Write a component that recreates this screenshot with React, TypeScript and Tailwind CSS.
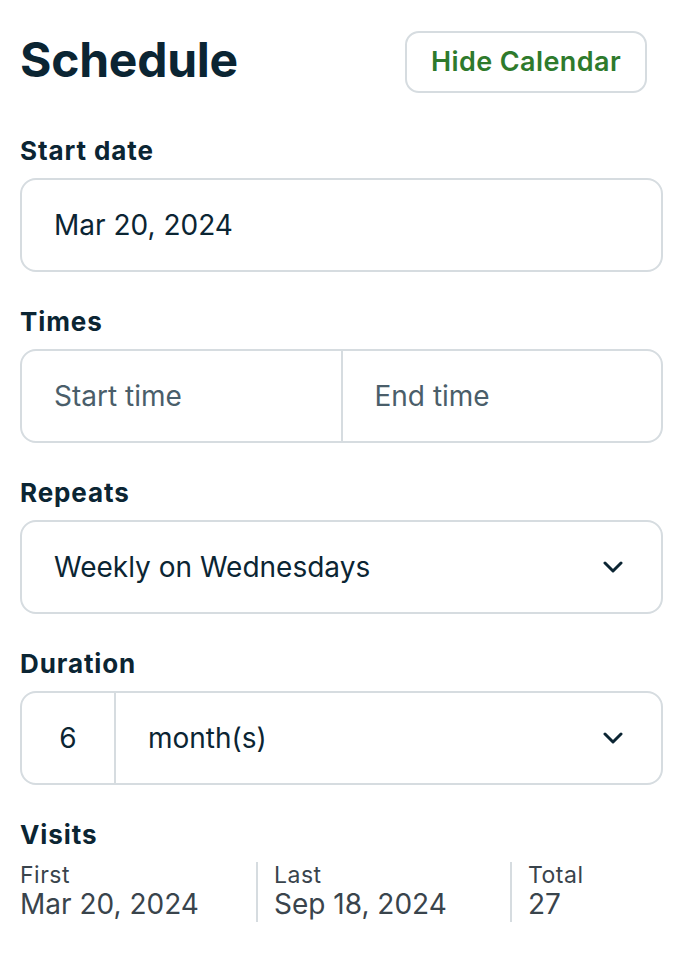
import type { ReactNode } from "react";

const label = "text-[26px] leading-[32px] font-bold tracking-[0.9px] text-[#0b2533]";
const box = "h-[94px] w-[643px] rounded-[16px] border-2 border-[#d6dce0] bg-white flex";

function Field({ title, children, last }: { title: string; children: ReactNode; last?: boolean }) {
  return (
    <div className={last ? "" : "mb-[34px]"}>
      <div className={`${label} mb-[11px]`}>{title}</div>
      {children}
    </div>
  );
}

function Chevron() {
  return (
    <svg width="20" height="12" viewBox="0 0 20 12" fill="none" className="mr-[38px] shrink-0">
      <path d="M2 2l8 8 8-8" stroke="#0b2533" strokeWidth="3" strokeLinecap="round" strokeLinejoin="round" />
    </svg>
  );
}

export default function App() {
  const visits = [
    { label: "First", value: "Mar 20, 2024", cls: "w-[236px]" },
    { label: "Last", value: "Sep 18, 2024", cls: "w-[254px] border-l-2 border-[#d6dce0] pl-4" },
    { label: "Total", value: "27", cls: "flex-1 border-l-2 border-[#d6dce0] pl-4" },
  ];

  return (
    <div className="min-h-[968px] bg-white pl-[20px] pt-[31px]" style={{ fontFamily: "Inter, 'Noto Sans', sans-serif" }}>
      {/* header */}
      <div className="flex items-center justify-between w-[627px] h-[62px] mb-[42px]">
        <h1 className="text-[48px] leading-[48px] font-bold text-[#0b2533] mb-[4px] tracking-[-0.25px]">Schedule</h1>
        <button className="h-[62px] w-[242px] rounded-[14px] border-2 border-[#d6dce0] bg-white text-[27px] font-semibold tracking-[0.4px] text-[#2e7a2c]">
          Hide Calendar
        </button>
      </div>

      <Field title="Start date">
        <div className={`${box} items-center pl-[32px] text-[28px] text-[#0b2533]`}>Mar 20, 2024</div>
      </Field>

      <Field title="Times">
        <div className={`${box} text-[28px] text-[#4a5e6a]`}>
          <div className="flex-1 flex items-center pl-[32px] border-r-2 border-[#d6dce0]">Start time</div>
          <div className="flex-1 flex items-center pl-[32px]">End time</div>
        </div>
      </Field>

      <Field title="Repeats">
        <div className={`${box} items-center justify-between pl-[32px] text-[28px] text-[#0b2533]`}>
          <span>Weekly on Wednesdays</span>
          <Chevron />
        </div>
      </Field>

      <Field title="Duration">
        <div className={`${box} text-[28px] text-[#0b2533]`}>
          <div className="w-[94px] shrink-0 flex items-center justify-center border-r-2 border-[#d6dce0]">6</div>
          <div className="flex-1 flex items-center justify-between pl-[32px]">
            <span>month(s)</span>
            <Chevron />
          </div>
        </div>
      </Field>

      <Field title="Visits" last>
        <div className="flex w-[643px] text-[#39444c]">
          {visits.map((v) => (
            <div key={v.label} className={`h-[60px] ${v.cls}`}>
              <div className="text-[23px] leading-[26px] tracking-[0.5px]">{v.label}</div>
              <div className="text-[28px] leading-[32px]">{v.value}</div>
            </div>
          ))}
        </div>
      </Field>
    </div>
  );
}
